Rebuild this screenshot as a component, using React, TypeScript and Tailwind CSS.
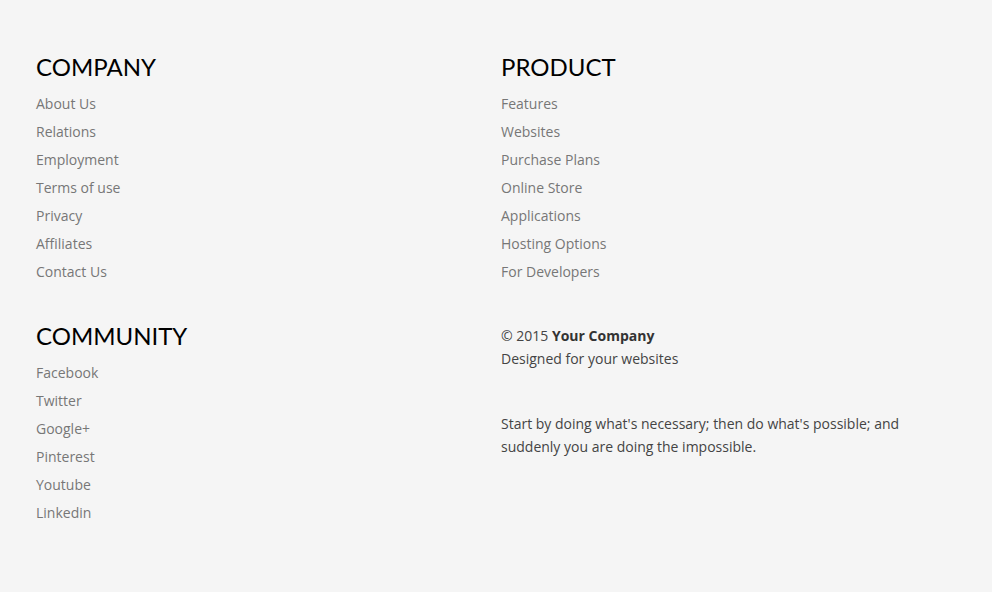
const company = ["About Us", "Relations", "Employment", "Terms of use", "Privacy", "Affiliates", "Contact Us"];
const product = ["Features", "Websites", "Purchase Plans", "Online Store", "Applications", "Hosting Options", "For Developers"];
const community = ["Facebook", "Twitter", "Google+", "Pinterest", "Youtube", "Linkedin"];

function LinkList({ title, items }: { title: string; items: string[] }) {
  return (
    <div>
      <h3 className="font-['Lato',sans-serif] text-[24px] leading-[30px] font-normal text-black uppercase">
        {title}
      </h3>
      <ul className="mt-[8px]">
        {items.map((item) => (
          <li key={item} className="text-[14px] leading-[28px]">
            <a href="#" className="text-[#777777]">
              {item}
            </a>
          </li>
        ))}
      </ul>
    </div>
  );
}

export default function App() {
  return (
    <div className="min-h-[592px] bg-[#f5f5f5] font-['Open_Sans',sans-serif] px-[36px] pt-[52px]">
      <div className="grid grid-cols-[465px_1fr] gap-y-[35px]">
        <LinkList title="Company" items={company} />
        <LinkList title="Product" items={product} />
        <LinkList title="Community" items={community} />
        <div className="pt-[3px] text-[14px] leading-[23px] text-[#444444]">
          <p>
            © 2015 <strong className="font-bold text-[#333333]">Your Company</strong>
          </p>
          <p>Designed for your websites</p>
          <p className="mt-[42px] max-w-[410px]">
            Start by doing what's necessary; then do what's possible; and suddenly you are doing the impossible.
          </p>
        </div>
      </div>
    </div>
  );
}
